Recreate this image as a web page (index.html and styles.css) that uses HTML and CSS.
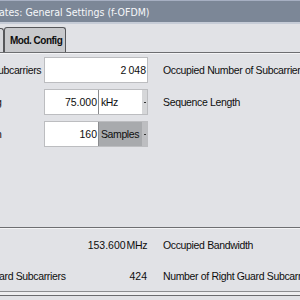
FILE: index.html
```html
<!DOCTYPE html>
<html lang="en">
<head>
    <meta charset="UTF-8">
    <meta name="viewport" content="width=device-width, initial-scale=1.0">
    <title>General Settings (f-OFDM)</title>
    <link rel="stylesheet" href="styles.css">
</head>
<body>
    <div class="window">
        <div class="titlebar">
            <span class="title">ates: General Settings (f-OFDM)</span>
        </div>

        <div class="tabs">
            <div class="tab tab-prev"></div>
            <div class="tab tab-active">Mod. Config</div>
        </div>

        <div class="params">
            <div class="label first">ubcarriers</div>
            <div class="field">
                <span class="value">2&#8201;048</span>
            </div>
            <div class="label right">Occupied Number of Subcarriers</div>

            <div class="label cut">g</div>
            <div class="field">
                <span class="value">75.000</span>
                <span class="unit">kHz</span>
                <span class="drop"></span>
            </div>
            <div class="label right">Sequence Length</div>

            <div class="label cut">h</div>
            <div class="field">
                <span class="value">160</span>
                <span class="unit unit-selected">Samples</span>
                <span class="drop drop-selected"></span>
            </div>
            <div class="label right"></div>
        </div>

        <div class="readout">
            <div class="label"></div>
            <div class="result">153.600<span class="result-unit">MHz</span></div>
            <div class="label right">Occupied Bandwidth</div>

            <div class="label">ard Subcarriers</div>
            <div class="result">424</div>
            <div class="label right">Number of Right Guard Subcarriers</div>
        </div>

        <div class="footer"></div>
    </div>
</body>
</html>
```

FILE: styles.css
```css
body {
    margin: 0;
    background-color: #e1e2e6;
    font-family: "Liberation Sans", Arial, sans-serif;
    color: #0e0e0e;
}

.window {
    width: 300px;
    height: 300px;
    overflow: hidden;
    display: flex;
    flex-direction: column;
}

/* title bar */
.titlebar {
    height: 21px;
    background-color: #7c8797;
    border-top: 1px solid #a6afc2;
    border-bottom: 2px solid #c6ccd7;
    display: flex;
    align-items: center;
    white-space: nowrap;
    overflow: hidden;
}

.title {
    font-family: "Liberation Sans Narrow", "DejaVu Sans Condensed", sans-serif;
    font-size: 10.5px;
    color: #f6f7fa;
    margin-left: -1px;
    margin-top: 1px;
}

/* tabs */
.tabs {
    height: 28px;
    display: flex;
    align-items: flex-end;
    border-bottom: 1px solid #6d6e71;
    box-shadow: 0 1px 0 #f4f4f6;
}

.tab {
    height: 24px;
    border: 1px solid #56575a;
    border-bottom: none;
    border-radius: 3px 3px 0 0;
    box-sizing: border-box;
}

.tab-prev {
    width: 4px;
    background-color: #d7d8dc;
    border-left: none;
    border-radius: 0 3px 0 0;
}

.tab-active {
    width: 62px;
    height: 25px;
    background-color: #c8c9cc;
    font-size: 10px;
    font-weight: bold;
    letter-spacing: -0.5px;
    padding-left: 5px;
    line-height: 25px;
}

/* parameter grid */
.params,
.readout {
    display: grid;
    grid-template-columns: 44px 104px 1fr;
    font-size: 10.5px;
}

.params {
    margin-top: 4px;
    grid-auto-rows: 26px;
    row-gap: 6px;
}

.label {
    display: flex;
    align-items: center;
    white-space: nowrap;
    letter-spacing: -0.35px;
}

.label.right {
    padding-left: 15px;
}

.first {
    margin-left: -2px;
}

.cut {
    margin-left: -4px;
}

.field {
    display: flex;
    background-color: #ffffff;
    border: 1px solid #bcbdc0;
    box-sizing: border-box;
}

.value {
    flex: 1;
    display: flex;
    align-items: center;
    justify-content: flex-end;
    padding-right: 1px;
}

.unit {
    width: 44px;
    border-left: 1px solid #8a8b8e;
    display: flex;
    align-items: center;
    padding-left: 2px;
    box-sizing: border-box;
    letter-spacing: -0.4px;
}

.unit-selected {
    background-color: #a8aaad;
}

.drop {
    width: 5px;
    background-color: #d6d7d9;
    display: flex;
    align-items: center;
    justify-content: center;
}

.drop::after {
    content: "";
    width: 2px;
    height: 1px;
    background-color: #333;
}

.drop-selected {
    background-color: #bdbec1;
}

/* read-only results */
.readout {
    margin-top: auto;
    border-top: 1px solid #6e6f72;
    box-shadow: inset 0 1px 0 #f4f4f6;
    grid-auto-rows: 31px;
    padding-top: 1px;
}

.readout .label:not(.right) {
    margin-left: -1px;
}

.result {
    display: flex;
    align-items: center;
    justify-content: flex-end;
    padding-right: 1px;
}

.result-unit {
    margin-left: 1px;
    letter-spacing: -0.4px;
}

.footer {
    height: 3px;
    border-top: 1px solid #8c8d90;
    border-bottom: 1px solid #6b6c6f;
    margin-bottom: 4px;
    background-color: #eeeef0;
}
```
